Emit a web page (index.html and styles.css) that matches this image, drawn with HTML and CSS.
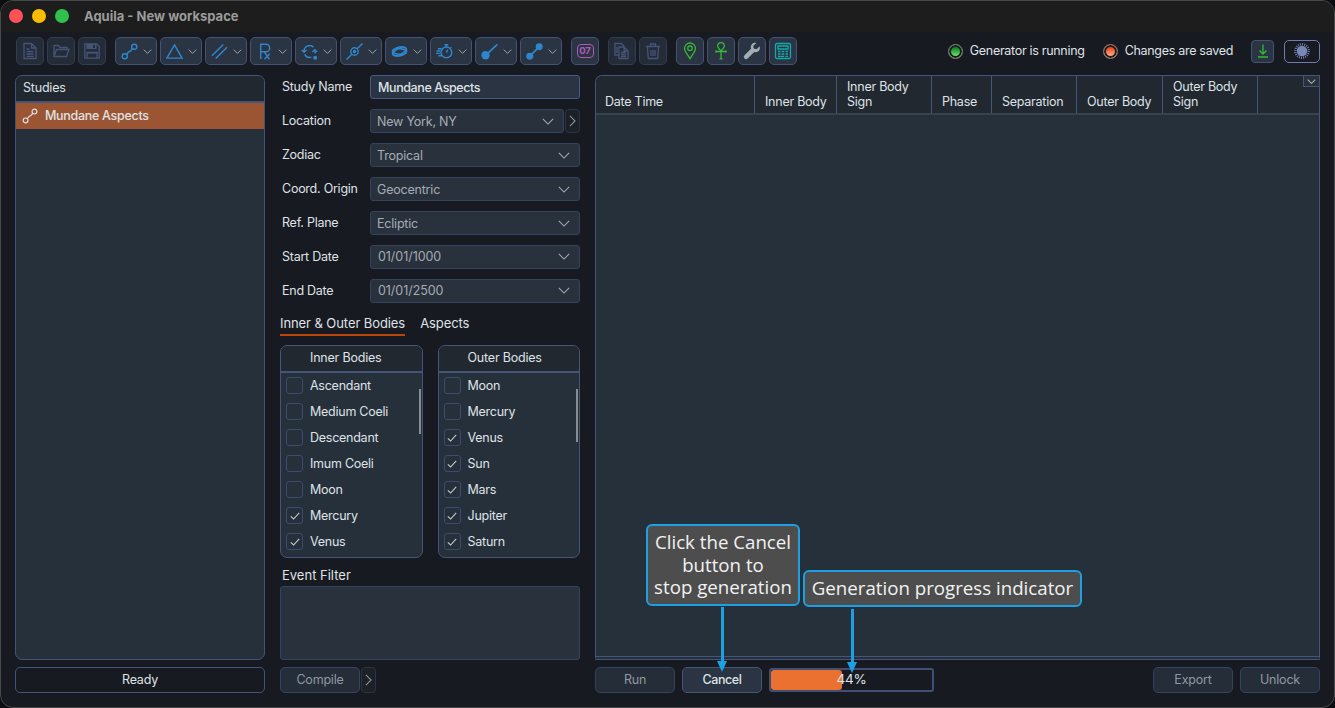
FILE: index.html
```
<!DOCTYPE html>
<html lang="en">
    <head>
        <meta charset="utf-8">
        <meta name="viewport" content="width=device-width, initial-scale=1.0">
        <title>Aquila - New workspace</title>
        <link rel="stylesheet" href="styles.css">
    </head>
    <body>

        <!-- shared symbols -->
        <svg class="symbols">
            <symbol id="down" viewBox="0 0 14 8"><path d="M1 1l6 6 6-6"/></symbol>
            <symbol id="right" viewBox="0 0 8 14"><path d="M1 1l6 6-6 6"/></symbol>
            <symbol id="aspect" viewBox="0 0 18 18"><circle cx="4" cy="14" r="2.700"/><circle cx="14" cy="4" r="2.700"/><path d="M5.900 12.100C7.300 10.700 7 9.500 9 9s1.700-1.700 3.100-3.100"/></symbol>
            <symbol id="check" viewBox="0 0 10 8"><path d="M.8 4.300l2.800 2.700L9.200.8"/></symbol>
        </svg>

        <div class="window">
            <div class="titlebar">
                <span class="light red"></span>
                <span class="light yellow"></span>
                <span class="light green"></span>
                <span class="title">Aquila - New workspace</span>
            </div>

            <div class="toolbar">
                <div class="group">
                    <button class="tool off"><svg viewBox="0 0 18 18"><path d="M3 1.500h7.500L15 6v10.500H3zM10.500 1.500V6H15M5.500 7h3M5.500 9.500h7M5.500 12h7M5.500 14.300h7"/></svg></button>
                    <button class="tool off"><svg viewBox="0 0 18 18"><path d="M2 14.500v-11h4.500l1.500 2h7v2M2 14.500l2.500-7h12.500l-2.500 7z"/></svg></button>
                    <button class="tool off"><svg viewBox="0 0 18 18"><path d="M1.800 1.800h11.700l2.700 2.700v11.700H1.800z"/><path class="fill" d="M3.500 2h10v5h-10zM3.500 10h11v1.500h-11z"/><path class="hole" d="M10 3h2v3h-2z"/><path d="M4 16v-5.500h10V16"/></svg></button>
                </div>
                <div class="group blue">
                    <button class="tool menu"><svg><use href="#aspect"/></svg><svg class="down"><use href="#down"/></svg></button>
                    <button class="tool menu"><svg viewBox="0 0 18 18"><path d="M9 2l8 14H1z"/></svg><svg class="down"><use href="#down"/></svg></button>
                    <button class="tool menu"><svg viewBox="0 0 18 18"><path d="M1 13.500L13 1.500M5 16.500L17 4.500"/></svg><svg class="down"><use href="#down"/></svg></button>
                    <button class="tool menu"><svg viewBox="0 0 18 18"><path d="M5 17V1.300h5.500a4 4 0 0 1 0 8H5M8.700 9.300l5.500 8M14.500 11.500L9 17.300"/></svg><svg class="down"><use href="#down"/></svg></button>
                    <button class="tool menu"><svg viewBox="0 0 18 18"><path d="M3.300 9.500a5.900 5.900 0 0 1 10-5M.8 7.500l2.500 2.300L6 7.500M14.900 7.500a5.900 5.900 0 0 1-.2 3.500M12 9.500l2.600-2.500L17.200 9.500M4 12a5.900 5.900 0 0 0 7 3"/><circle class="fill" cx="15" cy="15.700" r="2.100"/></svg><svg class="down"><use href="#down"/></svg></button>
                    <button class="tool menu"><svg viewBox="0 0 18 18"><circle cx="9" cy="9" r="3.900"/><circle class="fill" cx="9" cy="9" r="1.800"/><path d="M.5 17.500l5.700-5.700M11.800 6.200l5.700-5.700"/></svg><svg class="down"><use href="#down"/></svg></button>
                    <button class="tool menu"><svg viewBox="0 0 18 18"><g transform="rotate(-14 9 9)"><ellipse cx="9" cy="9" rx="7.800" ry="4.700"/><ellipse cx="9" cy="9" rx="7.500" ry="3" transform="rotate(18 9 9)"/><ellipse cx="9" cy="9" rx="7.800" ry="3" transform="rotate(-10 9 9)"/></g></svg><svg class="down"><use href="#down"/></svg></button>
                    <button class="tool menu"><svg viewBox="0 0 18 18"><circle cx="11" cy="10" r="5.700"/><path d="M11 10l1.500-3M9 1.800h4M11 2v2.500M15.300 5.500l1-1M2 6h4M.5 8.500h4M0 11h4.500M2.500 13.500H6"/></svg><svg class="down"><use href="#down"/></svg></button>
                    <button class="tool menu"><svg viewBox="0 0 18 18"><circle class="fill" cx="4.800" cy="13" r="4.400"/><path class="thick" d="M6 12L17.300 1.500"/></svg><svg class="down"><use href="#down"/></svg></button>
                    <button class="tool menu"><svg viewBox="0 0 18 18"><circle class="fill" cx="4" cy="14" r="3.700"/><circle class="fill" cx="14" cy="4" r="3.700"/><path class="thick" d="M5 13l8-8"/></svg><svg class="down"><use href="#down"/></svg></button>
                </div>
                <div class="group">
                    <button class="tool calendar"><span>07</span></button>
                </div>
                <div class="group">
                    <button class="tool off"><svg viewBox="0 0 18 18"><path d="M6 13H2V1.500h6.500L11 4v1M6 5h5l4 4v7.500H6zM11 5v4h4M8 10.500h5M8 12.500h5M8 14.500h5M4 5v6"/></svg></button>
                    <button class="tool off"><svg viewBox="0 0 18 18"><path d="M2 4.500h14M6.500 4V2h5v2M3.500 5l.8 11.500h9.400L14.500 5M7 8v6M9 8v6M11 8v6"/></svg></button>
                </div>
                <div class="group">
                    <button class="tool lime"><svg viewBox="0 0 18 18"><path d="M9 16.800C7 13 3.500 9.500 3.500 6.500a5.500 5.500 0 0 1 11 0C14.500 9.500 11 13 9 16.800z"/><circle cx="9" cy="6.300" r="2.300"/></svg></button>
                    <button class="tool lime"><svg viewBox="0 0 18 18"><path d="M9 9C7 7 5.700 5.700 5.700 4a3.300 3.300 0 0 1 6.600 0C12.300 5.700 11 7 9 9zM9 9v8M4 9.500h10M4 8.300v2.400M14 8.300v2.400M7.500 16.800h3"/></svg></button>
                    <button class="tool"><svg class="wrench" viewBox="0 0 18 18"><path d="M16.600 4.300l-3.100 2.900-2.700-.7-.6-2.600L13.400 1C10 0 7 3 8 6.800l-6.500 6.500a2.200 2.200 0 0 0 3.200 3.200L11.300 10c3.500 1 6.600-2 5.300-5.700z"/></svg></button>
                    <button class="tool teal"><svg viewBox="0 0 18 18"><rect x="1.500" y="1.500" width="15" height="15" rx="1.500"/><path d="M4 4h10v3H4zM4 9.500h2.500M7.700 9.500h2.600M11.500 9.500H14M4 12h2.500M7.700 12h2.600M11.500 12H14M4 14.300h6.300M11.500 14.300H14"/></svg></button>
                </div>
                <div class="status">
                    <span class="led running"></span><span class="state">Generator is running</span>
                    <span class="led saved"></span><span class="state">Changes are saved</span>
                    <button class="small lime"><svg viewBox="0 0 14 16"><path d="M7 1.500v9.500M3.500 7.500L7 11l3.500-3.500M2 14h10"/></svg></button>
                    <button class="theme"><svg viewBox="0 0 18 18"><circle class="fill" cx="9" cy="9" r="5.200"/><circle class="rays" cx="9" cy="9" r="6.700"/></svg></button>
                </div>
            </div>

            <div class="main">
                <div class="panel studies">
                    <div class="panel-head">Studies</div>
                    <div class="study"><svg><use href="#aspect"/></svg><span>Mundane Aspects</span></div>
                </div>

                <div class="settings">
                    <div class="form">
                        <label>Study Name</label>
                        <div class="field name">Mundane Aspects</div>
                        <label>Location</label>
                        <div class="split">
                            <div class="field">New York, NY<svg><use href="#down"/></svg></div>
                            <button class="more"><svg><use href="#right"/></svg></button>
                        </div>
                        <label>Zodiac</label>
                        <div class="field">Tropical<svg><use href="#down"/></svg></div>
                        <label>Coord. Origin</label>
                        <div class="field">Geocentric<svg><use href="#down"/></svg></div>
                        <label>Ref. Plane</label>
                        <div class="field">Ecliptic<svg><use href="#down"/></svg></div>
                        <label>Start Date</label>
                        <div class="field date">01/01/1000<svg><use href="#down"/></svg></div>
                        <label>End Date</label>
                        <div class="field date">01/01/2500<svg><use href="#down"/></svg></div>
                    </div>
                    <div class="tabs">
                        <span class="tab active">Inner &amp; Outer Bodies</span>
                        <span class="tab">Aspects</span>
                    </div>
                    <div class="bodies">
                        <div class="panel list">
                            <div class="list-head">Inner Bodies</div>
                            <div class="item"><i></i>Ascendant</div>
                            <div class="item"><i></i>Medium Coeli</div>
                            <div class="item"><i></i>Descendant</div>
                            <div class="item"><i></i>Imum Coeli</div>
                            <div class="item"><i></i>Moon</div>
                            <div class="item"><i><svg><use href="#check"/></svg></i>Mercury</div>
                            <div class="item"><i><svg><use href="#check"/></svg></i>Venus</div>
                            <div class="thumb"></div>
                        </div>
                        <div class="panel list">
                            <div class="list-head">Outer Bodies</div>
                            <div class="item"><i></i>Moon</div>
                            <div class="item"><i></i>Mercury</div>
                            <div class="item"><i><svg><use href="#check"/></svg></i>Venus</div>
                            <div class="item"><i><svg><use href="#check"/></svg></i>Sun</div>
                            <div class="item"><i><svg><use href="#check"/></svg></i>Mars</div>
                            <div class="item"><i><svg><use href="#check"/></svg></i>Jupiter</div>
                            <div class="item"><i><svg><use href="#check"/></svg></i>Saturn</div>
                            <div class="thumb tall"></div>
                        </div>
                    </div>
                    <div class="filter-label">Event Filter</div>
                    <div class="filter"></div>
                </div>

                <div class="panel results">
                    <div class="columns">
                        <span>Date Time</span>
                        <span>Inner Body</span>
                        <span>Inner Body Sign</span>
                        <span>Phase</span>
                        <span>Separation</span>
                        <span>Outer Body</span>
                        <span>Outer Body Sign</span>
                        <span></span>
                        <button class="column-menu"><svg><use href="#down"/></svg></button>
                    </div>
                    <div class="callout cancel-hint">Click the Cancel<br>button to<br>stop generation</div>
                    <div class="arrow cancel-arrow"></div>
                    <div class="callout progress-hint">Generation progress indicator</div>
                    <div class="arrow progress-arrow"></div>
                </div>

                <div class="ready">Ready</div>
                <div class="actions compile">
                    <button class="button">Compile</button>
                    <button class="more"><svg><use href="#right"/></svg></button>
                </div>
                <div class="actions">
                    <button class="button">Run</button>
                    <button class="button enabled">Cancel</button>
                    <div class="progress"><div class="bar" style="width: 44%"></div><span>44%</span></div>
                    <button class="button export">Export</button>
                    <button class="button">Unlock</button>
                </div>
            </div>
        </div>

    </body>
</html>
```
FILE: styles.css
```
* {
    box-sizing: border-box;
}
html, body {
    margin: 0;
    padding: 0;
    height: 100%;
    overflow: hidden;
    background: #0c0d10;
    color: #dfe2e6;
    font-family: Inter, sans-serif;
    font-size: 12.5px;
    letter-spacing: -.2px;
}
button {
    margin: 0;
    padding: 0;
    font: inherit;
    letter-spacing: inherit;
    color: inherit;
}
svg {
    display: block;
    width: 18px;
    height: 18px;
    flex: none;
    fill: none;
    stroke: currentColor;
    stroke-width: 1.3;
    overflow: visible;
}
svg .fill {
    fill: currentColor;
    stroke: none;
}
svg .thick {
    stroke-width: 1.9;
}
svg .hole {
    fill: #242e39;
    stroke: none;
}
.symbols {
    display: none;
}
.window {
    height: 708px;
    border: 1px solid #48494b;
    border-radius: 13px;
    background: #181a21;
    overflow: hidden;
}

/* title bar */
.titlebar {
    display: flex;
    align-items: center;
    height: 31px;
    padding: 0 0 1px 8px;
    background: #1d1d1d;
}
.light {
    width: 14px;
    height: 14px;
    margin-right: 9px;
    border-radius: 50%;
}
.red { background: #ff5257; }
.yellow { background: #fdbc04; }
.green { background: #2fc14c; }
.title {
    margin-left: 6px;
    color: #9b9b9b;
    font-size: 13px;
    font-weight: 700;
    letter-spacing: 0;
}

/* toolbar */
.toolbar {
    display: flex;
    gap: 9px;
    height: 28px;
    margin: 5px 14px 0 15px;
}
.group {
    display: flex;
    gap: 3px;
}
.tool {
    display: flex;
    align-items: center;
    justify-content: center;
    width: 28px;
    height: 28px;
    border: 1px solid #445375;
    border-radius: 5px;
    background: #2a3442;
}
.tool.off {
    border-color: #313d52;
    background: #232c37;
    color: #46547a;
}
.menu {
    width: 42px;
    gap: 5px;
}
.menu svg:first-child {
    width: 17px;
    height: 17px;
    stroke-width: 1.5;
}
.blue { color: #2f86cc; }
.lime { color: #38b738; }
.teal { color: #14a9ab; }
.down {
    width: 9px;
    height: 5px;
    color: #9da4ad;
    stroke-width: 1.6;
}
.calendar {
    color: #ae5bb8;
}
.calendar span {
    width: 17px;
    height: 14px;
    border: 1px solid;
    border-radius: 4px;
    font-size: 9.5px;
    font-weight: 700;
    line-height: 12px;
    letter-spacing: 0;
    text-align: center;
}
.wrench {
    color: #a3adb5;
    fill: currentColor;
    stroke: none;
}
.status {
    display: flex;
    align-items: center;
    margin-left: auto;
}
.state {
    padding-bottom: 2px;
    letter-spacing: -.3px;
}
.led {
    width: 15px;
    height: 15px;
    margin-right: 7px;
    border: 1px solid #85827d;
    border-radius: 50%;
    box-shadow: inset 0 0 0 2px #1c1d1e;
}
.running { background: linear-gradient(#118a26 25%, #63db68 80%); }
.saved {
    margin-left: 18px;
    background: linear-gradient(#f04a20 25%, #ffa077 75%);
}
.small, .theme {
    display: flex;
    align-items: center;
    justify-content: center;
    width: 23px;
    height: 23px;
    margin-left: 18px;
    border: 1px solid #445375;
    border-radius: 4px;
    background: #2a3442;
}
.small svg {
    width: 14px;
    height: 16px;
}
.theme {
    width: 36px;
    margin-left: 10px;
    border: 1px solid #6b7cad;
    border-radius: 5px;
    background: #181a21;
    color: #7787b8;
}
.rays {
    stroke-width: 2.4;
    stroke-dasharray: .9 1.205;
}

/* three columns over the button row */
.main {
    display: grid;
    grid-template-columns: 250px 300px 725px;
    grid-template-rows: 585px 26px;
    gap: 7px 15px;
    margin: 10px 14px 0;
}
.panel {
    border: 1px solid #45557a;
    border-radius: 7px;
    background: #26303b;
    overflow: hidden;
}
.panel-head {
    height: 27px;
    padding-left: 7px;
    border-bottom: 2px solid #45557a;
    background: #212830;
    line-height: 24px;
}
.study {
    display: flex;
    align-items: center;
    gap: 7px;
    height: 26px;
    padding-left: 6px;
    background: #9b5532;
    font-weight: 500;
    letter-spacing: -.3px;
}
.study span {
    padding-bottom: 1px;
}
.study svg {
    width: 16px;
    height: 16px;
}

/* form */
.form {
    display: grid;
    grid-template-columns: 90px 210px;
    gap: 10px 0;
}
.form label {
    padding-left: 2px;
    line-height: 23px;
    letter-spacing: -.25px;
}
.field {
    display: flex;
    flex: 1;
    align-items: center;
    justify-content: space-between;
    height: 24px;
    padding: 0 9px 0 6px;
    border: 1px solid #344360;
    border-radius: 3px;
    background: #28313c;
    color: #a6acb3;
}
.field svg {
    width: 12px;
    height: 7px;
    stroke-width: 1.2;
}
.field.name {
    padding-left: 7px;
    border-color: #475a83;
    background: #2a3442;
    color: #dfe2e6;
    font-weight: 500;
    letter-spacing: -.4px;
}
.field.date {
    padding: 0 9px 1px 7px;
    letter-spacing: -.05px;
}
.split {
    display: flex;
    gap: 1px;
}
.more {
    display: flex;
    align-items: center;
    justify-content: center;
    width: 15px;
    border: 1px solid #2a3446;
    border-radius: 4px;
    background: #1c2128;
    color: #8a9098;
}
.more svg {
    width: 7px;
    height: 12px;
}
.tabs {
    display: flex;
    gap: 15px;
    height: 33px;
    font-size: 13px;
    letter-spacing: -.08px;
}
.tab {
    line-height: 40px;
}
.tab.active {
    border-bottom: 2px solid #b9450b;
}
.bodies {
    display: flex;
    gap: 15px;
    margin-top: 9px;
}
.list {
    position: relative;
    flex: 1;
    height: 213px;
}
.list-head {
    height: 27px;
    padding-left: 29px;
    border-bottom: 2px solid #45557a;
    background: #212830;
    line-height: 24px;
}
.item {
    display: flex;
    align-items: center;
    gap: 7px;
    height: 26px;
    padding: 0 0 1px 5px;
    letter-spacing: -.25px;
}
.item i {
    display: flex;
    align-items: center;
    justify-content: center;
    width: 17px;
    height: 17px;
    border: 1px solid #3c4b70;
    border-radius: 3px;
}
.item svg {
    width: 10px;
    height: 8px;
    stroke-width: 1.1;
    color: #c5cad0;
}
.thumb {
    position: absolute;
    top: 43px;
    right: 1px;
    width: 2px;
    height: 45px;
    background: #8a8c8e;
}
.thumb.tall {
    height: 53px;
}
.filter-label {
    height: 28px;
    padding-left: 2px;
    font-size: 13px;
    line-height: 34px;
    letter-spacing: 0;
}
.filter {
    height: 74px;
    border: 1px solid #344360;
    border-radius: 3px;
    background: #28313c;
}

/* results */
.results {
    position: relative;
    border-bottom: 4px double #45557a;
    border-radius: 7px 0 0 0;
    overflow: visible;
}
.columns {
    display: grid;
    grid-template-columns: 159px 82px 95px 60px 85px 86px 95px 61px;
    position: relative;
    height: 39px;
    border-bottom: 2px solid #3a424d;
    border-radius: 6px 0 0 0;
    background: #212830;
    line-height: 14.5px;
    letter-spacing: -.25px;
}
.columns span {
    display: flex;
    align-items: flex-end;
    padding: 0 4px 4px 10px;
    border-right: 1px solid #45557a;
}
.columns span:first-child {
    padding-left: 9px;
}
.columns span:nth-child(8) {
    border: 0;
}
.column-menu {
    position: absolute;
    top: -1px;
    right: -1px;
    display: flex;
    align-items: center;
    justify-content: center;
    width: 17px;
    height: 12px;
    border: 1px solid #45557a;
    background: #28313c;
    color: #a6acb3;
}
.column-menu svg {
    width: 9px;
    height: 5px;
    stroke-width: 1.7;
}

/* annotations over the window */
.callout {
    position: absolute;
    z-index: 1;
    border: 2.5px solid #1d9fe3;
    border-radius: 6px;
    background: #4d4d4d;
    color: #f2f2f2;
    font-family: "Open Sans", sans-serif;
    font-size: 18.7px;
    line-height: 22.5px;
    letter-spacing: 0;
    text-align: center;
    white-space: nowrap;
}
.cancel-hint {
    left: 50px;
    top: 448px;
    width: 154px;
    height: 82px;
    padding-top: 5px;
}
.progress-hint {
    left: 207px;
    top: 494px;
    width: 279px;
    height: 37px;
    padding-top: 5px;
}
.arrow {
    position: absolute;
    z-index: 1;
    width: 3px;
    background: #1d9fe3;
}
.arrow::after {
    content: "";
    position: absolute;
    left: -4px;
    bottom: -11px;
    border: 5.5px solid transparent;
    border-top: 11px solid #1d9fe3;
    border-bottom: 0;
}
.cancel-arrow {
    left: 125px;
    top: 531px;
    height: 54px;
}
.progress-arrow {
    left: 255px;
    top: 533px;
    height: 53px;
}

/* bottom row */
.ready {
    border: 1px solid #45557a;
    border-radius: 5px;
    line-height: 24px;
    text-align: center;
}
.actions {
    display: flex;
    gap: 7px;
}
.compile {
    gap: 1px;
}
.button {
    width: 80px;
    padding-bottom: 1px;
    border: 1px solid #344360;
    border-radius: 5px;
    background: #242d38;
    color: #9299a2;
}
.button.enabled {
    border-color: #45557a;
    background: #2a3442;
    color: #dfe2e6;
    font-weight: 500;
    letter-spacing: -.4px;
}
.progress {
    position: relative;
    width: 165px;
    height: 24px;
    margin-top: 1px;
    border: 2px solid #414f72;
    border-radius: 3px;
    font-size: 13.5px;
    line-height: 19px;
    text-align: center;
}
.bar {
    height: 20px;
    border-radius: 3px;
    background: #ea7130;
}
.progress span {
    position: absolute;
    inset: 0;
}
.export {
    margin-left: auto;
}
```
